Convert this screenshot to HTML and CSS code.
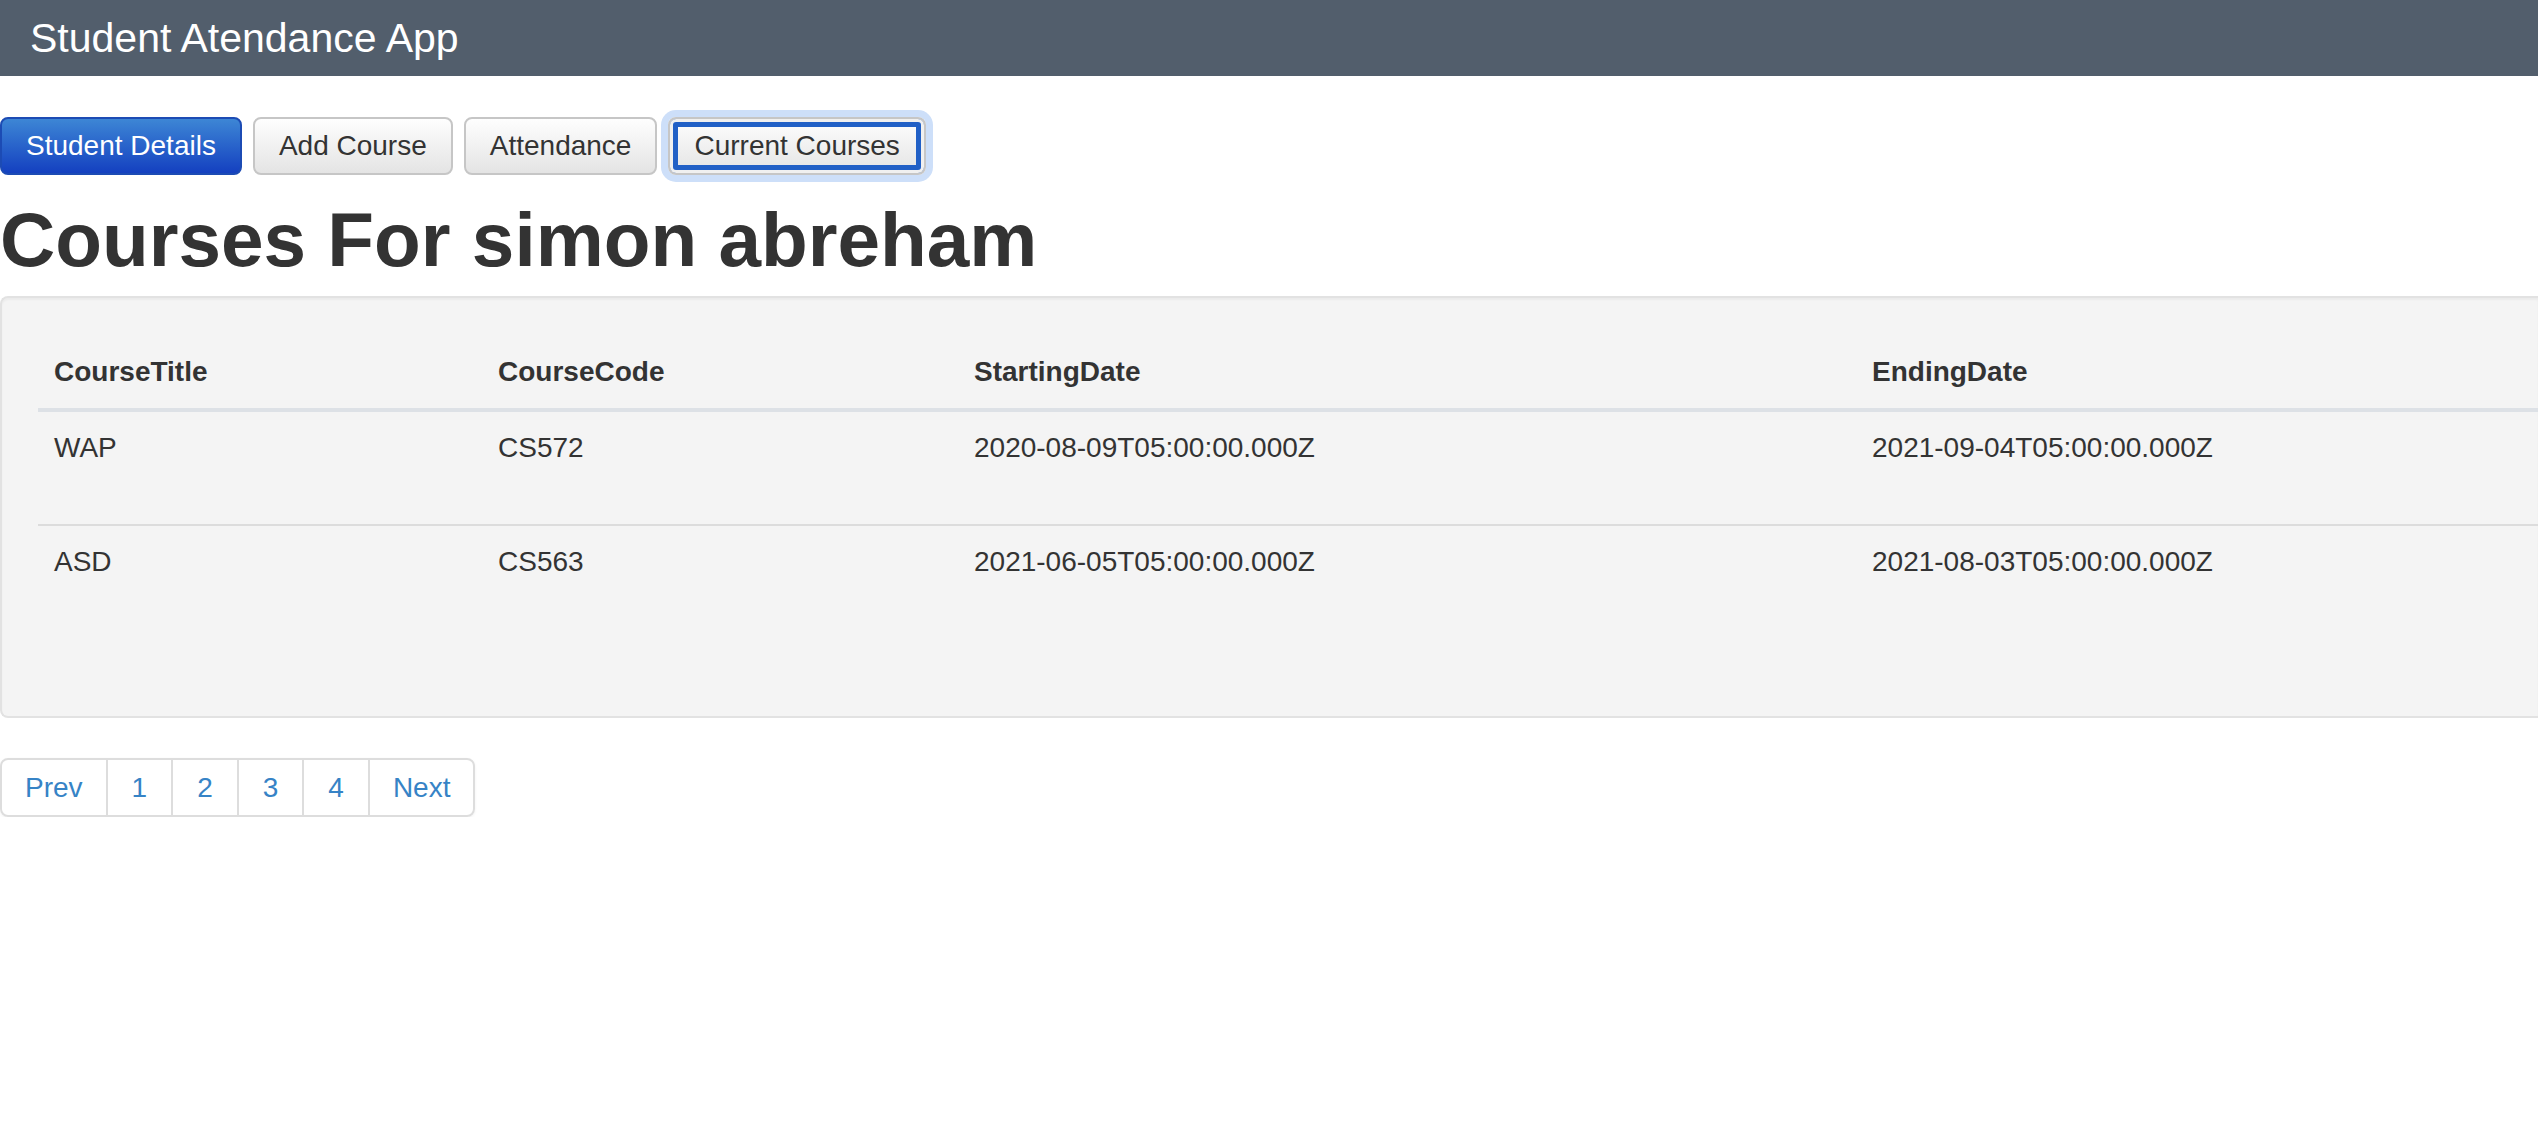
FILE: index.html
```html
<!DOCTYPE html>
<html lang="en">
<head>
<meta charset="utf-8">
<title>Student Atendance App</title>
<link rel="stylesheet" href="styles.css">
</head>
<body>
<header class="topbar">Student Atendance App</header>
<nav class="nav-buttons">
  <button class="btn btn-primary">Student Details</button>
  <button class="btn">Add Course</button>
  <button class="btn">Attendance</button>
  <button class="btn btn-focus">Current Courses</button>
</nav>
<h1 class="page-title">Courses For simon abreham</h1>
<section class="well">
  <table class="course-table">
    <colgroup>
      <col class="c1"><col class="c2"><col class="c3"><col class="c4">
    </colgroup>
    <thead>
      <tr><th>CourseTitle</th><th>CourseCode</th><th>StartingDate</th><th>EndingDate</th></tr>
    </thead>
    <tbody>
      <tr><td>WAP</td><td>CS572</td><td>2020-08-09T05:00:00.000Z</td><td>2021-09-04T05:00:00.000Z</td></tr>
      <tr><td>ASD</td><td>CS563</td><td>2021-06-05T05:00:00.000Z</td><td>2021-08-03T05:00:00.000Z</td></tr>
    </tbody>
  </table>
</section>
<ul class="pager">
  <li><a class="wide" href="#">Prev</a></li>
  <li><a href="#">1</a></li>
  <li><a href="#">2</a></li>
  <li><a href="#">3</a></li>
  <li><a href="#">4</a></li>
  <li><a class="wide" href="#">Next</a></li>
</ul>
</body>
</html>
```
FILE: styles.css
```css
html, body {
  margin: 0;
  padding: 0;
  background: #fff;
}
body {
  font-family: "Liberation Sans", Arial, Helvetica, sans-serif;
  font-size: 28px;
  color: #333;
  overflow-x: hidden;
}
.topbar {
  height: 76px;
  line-height: 76px;
  background: #525e6c;
  color: #fff;
  font-size: 41px;
  padding-left: 30px;
}
.nav-buttons {
  display: flex;
  gap: 11px;
  margin-top: 41px;
}
.btn {
  box-sizing: border-box;
  height: 58px;
  padding: 0 24px;
  border: 2px solid #c6c6c6;
  border-radius: 8px;
  background: linear-gradient(#fefefe, #e4e4e4);
  font-family: "Liberation Sans", Arial, Helvetica, sans-serif;
  font-size: 28px;
  color: #333;
  cursor: pointer;
}
.btn-primary {
  background: linear-gradient(#3d86d5, #1440c0);
  border-color: #1c4bb4;
  color: #fff;
}
.btn-focus {
  box-shadow: 0 0 0 7px #cddff9, inset 0 0 0 3px #f0f0f0, inset 0 0 0 8px #2160c6;
}
.page-title {
  margin: 23px 0 14px;
  font-size: 76.5px;
  line-height: 1.1;
  font-weight: bold;
  color: #333;
}
.well {
  box-sizing: border-box;
  background: #f4f4f4;
  border: 2px solid #e2e2e2;
  border-right: 0;
  border-radius: 8px 0 0 8px;
  padding: 38px 0 38px 36px;
  box-shadow: inset 0 2px 2px rgba(0, 0, 0, 0.04);
}
.course-table {
  width: 100%;
  border-collapse: separate;
  border-spacing: 0;
  margin-bottom: 40px;
}
.c1 { width: 444px; }
.c2 { width: 476px; }
.c3 { width: 898px; }
.course-table th {
  text-align: left;
  font-weight: bold;
  padding: 16px;
  line-height: 40px;
  border-bottom: 4px solid #dde1e6;
}
.course-table td {
  padding: 16px 16px 56px;
  line-height: 40px;
  vertical-align: top;
}
.course-table tbody tr + tr td {
  border-top: 2px solid #dcdcdc;
}
.pager {
  display: inline-flex;
  list-style: none;
  margin: 40px 0 0;
  padding: 0;
  border: 2px solid #dddddd;
  border-radius: 8px;
  box-shadow: 0 1px 3px rgba(0, 0, 0, 0.06);
}
.pager li + li {
  border-left: 2px solid #dddddd;
}
.pager a {
  display: block;
  padding: 0 24px;
  line-height: 55px;
  color: #3683c6;
  text-decoration: none;
}
.pager a.wide {
  padding: 0 23px;
}
```
